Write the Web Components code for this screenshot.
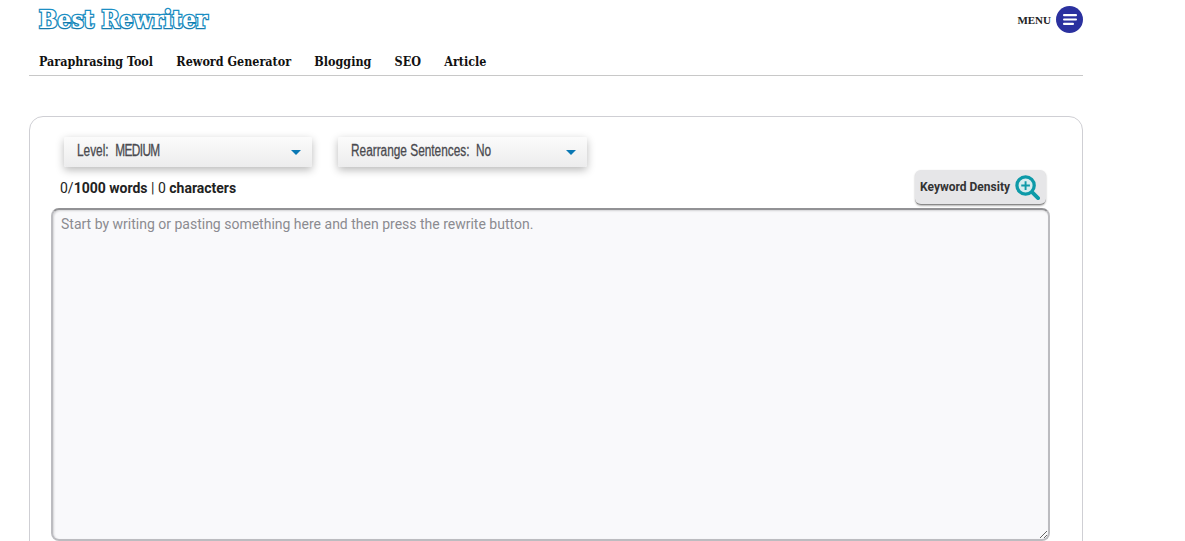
<!DOCTYPE html>
<html>
<head>
<meta charset="utf-8">
<title>Best Rewriter</title>
<style>
html, body { margin: 0; height: 541px; overflow: hidden; background: #fff; }
</style>
</head>
<body>
<site-header></site-header>
<editor-card>
  <select-box slot="selects" label="Level:" value="MEDIUM" style="width:248px; --value-track:-.8px"></select-box>
  <select-box slot="selects" label="Rearrange Sentences:" value="No" style="width:249px"></select-box>
</editor-card>

<script>
class SiteHeader extends HTMLElement {
  constructor() {
    super();
    const shadow = this.attachShadow({ mode: "open" });
    shadow.innerHTML = `
    <style>
    :host {
      display: block;
      width: 1054px;
      margin-left: 29px;
      height: 76px;
      box-sizing: border-box;
      border-bottom: 1px solid #c8c8c8;
      font-family: "DejaVu Serif Condensed", "DejaVu Serif", serif;
    }
    .top {
      display: flex;
      justify-content: space-between;
      align-items: center;
      height: 39px;
      padding-left: 10px;
    }
    .logo {
      font-weight: bold;
      font-size: 24.3px;
      line-height: 36px;
      color: #fff;
      -webkit-text-stroke: 2.6px #1c8fc4;
      paint-order: stroke fill;
      text-shadow: 0 1px 0 #1878a8;
    }
    .menu {
      display: flex;
      align-items: center;
      gap: 5px;
      font-family: "Liberation Serif", serif;
      font-size: 11px;
      color: #222;
      font-weight: bold;
    }
    .menu span { padding-top: 1px; }
    .burger {
      width: 27px;
      height: 27px;
      border-radius: 50%;
      background: #2b319f;
      display: flex;
      align-items: center;
      justify-content: center;
    }
    nav {
      display: flex;
      gap: 23.25px;
      padding: 15px 0 0 10px;
      font-size: 12.45px;
      font-weight: bold;
      color: #111;
    }
    </style>
    <div class="top">
      <div class="logo">Best Rewriter</div>
      <div class="menu"><span>MENU</span>
        <div class="burger">
          <svg width="14" height="11" viewBox="0 0 14 11">
            <rect x="0" y="0" width="14" height="2.2" rx="1" fill="#fff"/>
            <rect x="0" y="4.4" width="14" height="2.2" rx="1" fill="#fff"/>
            <rect x="0" y="8.8" width="11" height="2.2" rx="1" fill="#fff"/>
          </svg>
        </div>
      </div>
    </div>
    <nav>
      <span>Paraphrasing Tool</span>
      <span>Reword Generator</span>
      <span>Blogging</span>
      <span>SEO</span>
      <span>Article</span>
    </nav>`;
  }
}
customElements.define("site-header", SiteHeader);

class SelectBox extends HTMLElement {
  constructor() {
    super();
    this.attachShadow({ mode: "open" });
  }
  connectedCallback() {
    this.shadowRoot.innerHTML = `
    <style>
    :host {
      display: flex;
      align-items: center;
      justify-content: space-between;
      box-sizing: border-box;
      height: 30px;
      padding: 0 11px 0 12.5px;
      background: linear-gradient(#fbfbfb, #ececed);
      border-radius: 2px;
      box-shadow: 0 3px 8px rgba(0,0,0,.28);
      font-family: "Liberation Sans", sans-serif;
      font-size: 16px;
      color: #4a4a4f;
    }
    .txt {
      display: block;
      width: 0;
      white-space: pre;
      transform: scaleX(.74);
      transform-origin: left center;
      -webkit-text-stroke: .3px #4a4a4f;
      padding-bottom: 3px;
    }
    .val { letter-spacing: var(--value-track, 0); }
    .arrow {
      width: 0;
      height: 0;
      border-width: 5px 5.5px 0 5.5px;
      border-style: solid;
      border-color: #0a78b4 transparent transparent transparent;
    }
    </style>
    <span class="txt">${this.getAttribute("label")}  <span class="val">${this.getAttribute("value")}</span></span>
    <span class="arrow"></span>`;
  }
}
customElements.define("select-box", SelectBox);

class EditorCard extends HTMLElement {
  constructor() {
    super();
    const shadow = this.attachShadow({ mode: "open" });
    shadow.innerHTML = `
    <style>
    :host {
      display: block;
      box-sizing: border-box;
      width: 1054px;
      height: 470px;
      margin: 40px 0 0 29px;
      padding: 20px 32px 0 21px;
      border: 1px solid #cfcfd4;
      border-radius: 14px;
      font-family: Roboto, "Liberation Sans", sans-serif;
    }
    .selects {
      display: flex;
      gap: 26px;
      padding-left: 13px;
      height: 30px;
    }
    .bar {
      display: flex;
      justify-content: space-between;
      align-items: center;
      height: 37px;
      margin-top: 2px;
      padding: 0 4px 0 9px;
      font-size: 14px;
      color: #222;
    }
    .density {
      display: flex;
      align-items: center;
      gap: 5px;
      box-sizing: border-box;
      width: 131px;
      height: 35px;
      padding-left: 5px;
      background: #e6e6e8;
      border-radius: 6px;
      border-bottom: 1px solid #8a8a8a;
      box-shadow: 0 1px 2px rgba(0,0,0,.3);
      font-size: 12px;
      font-weight: 700;
      color: #333;
    }
    textarea {
      display: block;
      box-sizing: border-box;
      width: 999px;
      height: 333px;
      margin-top: 2px;
      padding: 6px 8px;
      background: #f9f9fb;
      border: 2px solid #bcbcc0;
      border-top-color: #929295;
      border-radius: 8px;
      box-shadow: inset 1px 1px 2px rgba(0,0,0,.15);
      font-family: Roboto, "Liberation Sans", sans-serif;
      font-size: 14px;
      line-height: 17px;
      outline: none;
    }
    textarea::placeholder { color: #8b8b90; opacity: 1; }
    </style>
    <div class="selects"><slot name="selects"></slot></div>
    <div class="bar">
      <div>0/<b>1000 words</b> | 0 <b>characters</b></div>
      <div class="density">Keyword Density
        <svg width="25" height="25" viewBox="0 0 26 26">
          <circle cx="11" cy="11" r="9" fill="#d5ecee" stroke="#0d9aa8" stroke-width="3.4"/>
          <path d="M11 6.5v9M6.5 11h9" stroke="#0d9aa8" stroke-width="2" fill="none"/>
          <path d="M18 18L24 24" stroke="#0d9aa8" stroke-width="4" stroke-linecap="round"/>
        </svg>
      </div>
    </div>
    <textarea placeholder="Start by writing or pasting something here and then press the rewrite button."></textarea>`;
  }
}
customElements.define("editor-card", EditorCard);
</script>
</body>
</html>
